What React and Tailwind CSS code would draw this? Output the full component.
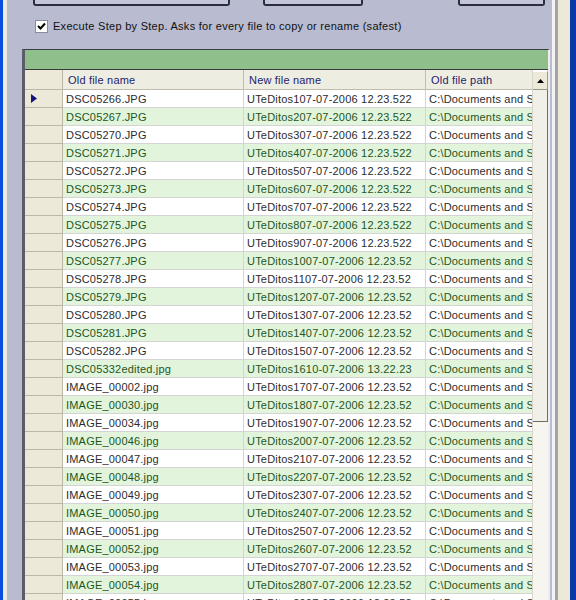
import React from "react";

const oldNames = [
  "DSC05266.JPG",
  "DSC05267.JPG",
  "DSC05270.JPG",
  "DSC05271.JPG",
  "DSC05272.JPG",
  "DSC05273.JPG",
  "DSC05274.JPG",
  "DSC05275.JPG",
  "DSC05276.JPG",
  "DSC05277.JPG",
  "DSC05278.JPG",
  "DSC05279.JPG",
  "DSC05280.JPG",
  "DSC05281.JPG",
  "DSC05282.JPG",
  "DSC05332edited.jpg",
  "IMAGE_00002.jpg",
  "IMAGE_00030.jpg",
  "IMAGE_00034.jpg",
  "IMAGE_00046.jpg",
  "IMAGE_00047.jpg",
  "IMAGE_00048.jpg",
  "IMAGE_00049.jpg",
  "IMAGE_00050.jpg",
  "IMAGE_00051.jpg",
  "IMAGE_00052.jpg",
  "IMAGE_00053.jpg",
  "IMAGE_00054.jpg",
  "IMAGE_00055.jpg",
];

const rows = oldNames.map((name, i) => {
  const n = i + 1;
  let newName = `UTeDitos${n}07-07-2006 12.23.52${n <= 9 ? "2" : ""}`;
  if (n === 16) newName = "UTeDitos1610-07-2006 13.22.23";
  return { oldName: name, newName, path: "C:\\Documents and Settings\\Fotos" };
});

const font = { fontFamily: '"Liberation Sans", Arial, sans-serif' };

const Row = ({ row, index }) => {
  const green = index % 2 === 1;
  const cell = green
    ? "bg-[#e2f4dc] text-[#1d561d]"
    : "bg-white text-[#2c2c2c]";
  return (
    <div className="flex h-[18px] tracking-[0.2px]">
      <div className="w-[38px] shrink-0 bg-[#ece9d8] border-r border-b border-[#bcb8a8] flex items-center pl-[6px]">
        {index === 0 && (
          <svg width="6" height="9" viewBox="0 0 6 9">
            <path d="M0 0 L6 4.5 L0 9 Z" fill="#14147a" />
          </svg>
        )}
      </div>
      <div className={`w-[181px] shrink-0 border-r border-b border-[#d4d4d4] pl-[3px] pt-[2px] leading-[15px] whitespace-nowrap overflow-hidden ${cell}`}>
        {row.oldName}
      </div>
      <div className={`w-[182px] shrink-0 border-r border-b border-[#d4d4d4] pl-[3px] pt-[2px] leading-[15px] whitespace-nowrap overflow-hidden ${cell}`}>
        {row.newName}
      </div>
      <div className={`w-[106px] shrink-0 border-b border-[#d4d4d4] pl-[3px] pt-[2px] leading-[15px] whitespace-nowrap overflow-hidden ${cell}`}>
        {row.path}
      </div>
    </div>
  );
};

export default function App() {
  return (
    <div className="w-[576px] h-[600px] overflow-hidden flex text-[11px]" style={font}>
      {/* left window frame */}
      <div className="w-[3px] shrink-0 bg-[#0a4ee0]" />
      <div className="w-[4px] shrink-0 bg-[#eeece0]" />

      {/* dialog body */}
      <div className="w-[545px] shrink-0 bg-[#b9bbd0] flex flex-col">
        {/* buttons (cut off at the top) */}
        <div className="flex h-[6px] shrink-0">
          <div className="ml-[26px] w-[197px] h-[6px] border-x-2 border-b-2 border-[#2b2d3e] rounded-b-[3px] bg-[#c3c5d9]" />
          <div className="ml-[33px] w-[100px] h-[6px] border-x-2 border-b-2 border-[#2b2d3e] rounded-b-[3px] bg-[#c3c5d9]" />
          <div className="ml-[95px] w-[87px] h-[6px] border-x-2 border-b-2 border-[#2b2d3e] rounded-b-[3px] bg-[#c3c5d9]" />
        </div>

        {/* step by step checkbox */}
        <div className="flex items-center mt-[14px] ml-[28px] h-[13px] shrink-0">
          <div className="w-[13px] h-[13px] bg-white border border-[#8a8c9c] flex items-center justify-center">
            <svg width="9" height="9" viewBox="0 0 9 9">
              <path d="M1 4 L3.5 6.5 L8 1.5" fill="none" stroke="#000" strokeWidth="2" />
            </svg>
          </div>
          <span className="ml-[5px] text-[11px] tracking-[0.28px] text-[#111] whitespace-nowrap">
            Execute Step by Step. Asks for every file to copy or rename (safest)
          </span>
        </div>

        {/* grid */}
        <div className="mt-[16px] ml-[15px] w-[528px] flex-1 min-h-0 flex flex-col border-t border-[#3c3c44] border-l-[3px] border-l-[#5c5d6a] border-r-2 border-r-[#eeeeee] overflow-hidden bg-white">
          <div className="h-[20px] shrink-0 bg-[#8fc08b] border-b border-[#3a3a3a]" />
          <div className="flex flex-1 min-h-0">
            <div className="w-[507px] shrink-0 flex flex-col overflow-hidden">
              {/* header */}
              <div className="flex h-[20px] shrink-0 text-[#23236e] tracking-[0.2px]">
                <div className="w-[38px] shrink-0 bg-[#ece9d8] border-r border-b border-[#bcb8a8]" />
                <div className="w-[181px] shrink-0 bg-[#eeede2] border-r border-b border-[#c0bcae] pl-[5px] pt-[3px] leading-[15px]">
                  Old file name
                </div>
                <div className="w-[182px] shrink-0 bg-[#eeede2] border-r border-b border-[#c0bcae] pl-[5px] pt-[3px] leading-[15px]">
                  New file name
                </div>
                <div className="w-[106px] shrink-0 bg-[#eeede2] border-b border-[#c0bcae] pl-[5px] pt-[3px] leading-[15px]">
                  Old file path
                </div>
              </div>
              {rows.map((row, i) => (
                <Row key={i} row={row} index={i} />
              ))}
            </div>

            {/* vertical scrollbar */}
            <div className="w-[16px] shrink-0 flex flex-col bg-[#f4f3ec] border-l border-[#d8d6cc]">
              <div className="h-[20px] shrink-0 bg-[#ece9d8] border-t-2 border-t-[#ffffff] border-b border-r border-[#9a988c] flex items-center justify-center">
                <svg width="7" height="4" viewBox="0 0 7 4">
                  <path d="M0 4 L3.5 0 L7 4 Z" fill="#000" />
                </svg>
              </div>
              <div className="h-[332px] shrink-0 bg-[#f1f0e8] border-r border-b border-[#6e6c64]" />
              <div className="flex-1 bg-[#f6f5ef]" />
            </div>
          </div>
        </div>
      </div>

      {/* right window frame */}
      <div className="w-[3px] shrink-0 bg-[#f2f2f2]" />
      <div className="w-[3px] shrink-0 bg-[#a3a3a8]" />
      <div className="w-[12px] shrink-0 bg-[#ece9d8]" />
      <div className="w-[6px] shrink-0 bg-[#0a3aa8]" />
    </div>
  );
}
